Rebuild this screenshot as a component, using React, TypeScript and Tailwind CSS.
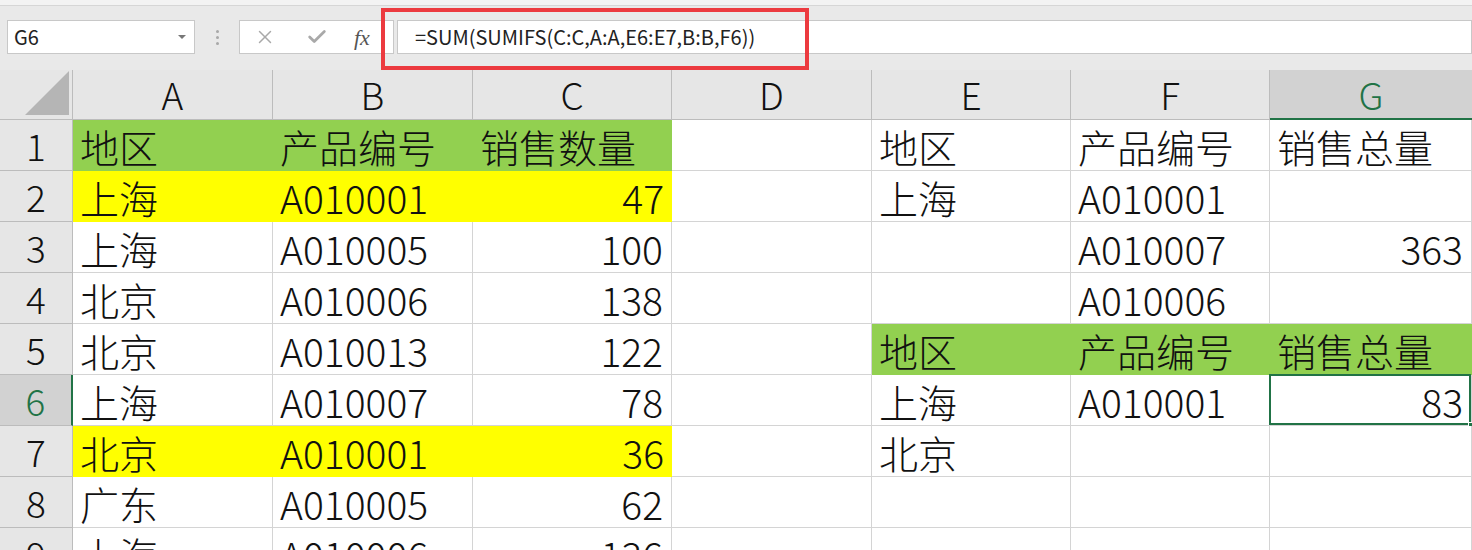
import { X, Check } from "lucide-react"

const FONT = { fontFamily: '"Noto Sans CJK SC", "Noto Sans", sans-serif' }

type Cell = { t?: string; num?: boolean; bg?: string }

const cols = ["A", "B", "C", "D", "E", "F", "G"]
const widths = [200, 200, 199, 200, 199, 199, 202]

const G = "bg-[#92d050]"
const Y = "bg-[#ffff00]"

const rows: Cell[][] = [
  [{ t: "地区", bg: G }, { t: "产品编号", bg: G }, { t: "销售数量", bg: G }, {}, { t: "地区" }, { t: "产品编号" }, { t: "销售总量" }],
  [{ t: "上海", bg: Y }, { t: "A010001", bg: Y }, { t: "47", num: true, bg: Y }, {}, { t: "上海" }, { t: "A010001" }, {}],
  [{ t: "上海" }, { t: "A010005" }, { t: "100", num: true }, {}, {}, { t: "A010007" }, { t: "363", num: true }],
  [{ t: "北京" }, { t: "A010006" }, { t: "138", num: true }, {}, {}, { t: "A010006" }, {}],
  [{ t: "北京" }, { t: "A010013" }, { t: "122", num: true }, {}, { t: "地区", bg: G }, { t: "产品编号", bg: G }, { t: "销售总量", bg: G }],
  [{ t: "上海" }, { t: "A010007" }, { t: "78", num: true }, {}, { t: "上海" }, { t: "A010001" }, { t: "83", num: true }],
  [{ t: "北京", bg: Y }, { t: "A010001", bg: Y }, { t: "36", num: true, bg: Y }, {}, { t: "北京" }, {}, {}],
  [{ t: "广东" }, { t: "A010005" }, { t: "62", num: true }, {}, {}, {}, {}],
  [{ t: "上海" }, { t: "A010006" }, { t: "136", num: true }, {}, {}, {}, {}],
]

function FormulaBar() {
  return (
    <div className="relative h-[70px] bg-[#e9e9e9]">
      <div className="h-[6px] bg-[#f3f3f3] border-b border-[#d6d6d6]" />
      <div className="flex items-center pt-[14px]">
        <div className="ml-[7px] w-[188px] h-[34px] bg-white border border-[#c8c8c8] flex items-center justify-between pl-[6px] pr-[8px]">
          <span className="text-[20px] text-[#222]" style={FONT}>G6</span>
          <span className="w-0 h-0 border-l-[4px] border-r-[4px] border-t-[4px] border-l-transparent border-r-transparent border-t-[#777]" />
        </div>
        <div className="w-[44px] flex flex-col items-center gap-[3px]">
          <span className="w-[3px] h-[3px] rounded-full bg-[#a8a8a8]" />
          <span className="w-[3px] h-[3px] rounded-full bg-[#a8a8a8]" />
          <span className="w-[3px] h-[3px] rounded-full bg-[#a8a8a8]" />
        </div>
        <div className="w-[155px] h-[34px] bg-white border border-[#c8c8c8] flex items-center pl-[14px]">
          <X className="w-[22px] h-[22px] text-[#a9a9a9]" strokeWidth={1.6} />
          <Check className="w-[22px] h-[22px] text-[#a9a9a9] ml-[30px]" strokeWidth={3} />
          <span className="ml-[26px] italic text-[22px] text-[#555]" style={{ fontFamily: '"Liberation Serif", serif' }}>
            fx
          </span>
        </div>
        <div className="ml-[3px] flex-1 h-[34px] bg-white border border-[#c8c8c8] flex items-center pl-[17px]">
          <span className="text-[20px] text-[#222]" style={FONT}>=SUM(SUMIFS(C:C,A:A,E6:E7,B:B,F6))</span>
        </div>
      </div>
      {/* red annotation frame */}
      <div className="absolute left-[381px] top-[8px] w-[428px] h-[62px] border-[4px] border-[#ec3a3f]" />
    </div>
  )
}

export default function App() {
  return (
    <div className="w-[1472px] h-[550px] overflow-hidden bg-white" style={FONT}>
      <FormulaBar />
      <div className="grid" style={{ gridTemplateColumns: `73px ${widths.map(w => w + "px").join(" ")}`, gridTemplateRows: "50px repeat(9, 51px)" }}>
        <div className="bg-[#e6e6e6] border-b border-r border-[#bcbcbc] relative overflow-hidden">
          <svg className="absolute right-[3px] bottom-[4px]" width="44" height="44" viewBox="0 0 44 44">
            <polygon points="44,0 44,44 0,44" fill="#b5b5b5" />
          </svg>
        </div>
        {cols.map(c =>
          c === "G" ? (
            <div key={c} className="bg-[#d2d2d2] border-b-2 border-[#217346] flex items-center justify-center text-[37px] font-light text-[#217346] leading-none">
              {c}
            </div>
          ) : (
            <div key={c} className="bg-[#e6e6e6] border-b border-r border-[#bcbcbc] flex items-center justify-center text-[37px] font-light text-[#111] leading-none">
              {c}
            </div>
          )
        )}
        {rows.map((r, i) => (
          <Row key={i} n={i + 1} cells={r} />
        ))}
      </div>
    </div>
  )
}

function Row({ n, cells }: { n: number; cells: Cell[] }) {
  const sel = n === 6
  return (
    <>
      <div
        className={
          sel
            ? "bg-[#d2d2d2] border-b border-[#bcbcbc] border-r-2 border-r-[#217346] flex items-center justify-center text-[37px] font-light text-[#217346] leading-none"
            : "bg-[#e6e6e6] border-b border-r border-[#bcbcbc] flex items-center justify-center text-[37px] font-light text-[#111] leading-none"
        }
      >
        {n}
      </div>
      {cells.map((c, j) => {
        const selected = sel && j === 6
        const next = cells[j + 1]
        const sameFill = c.bg && next && next.bg === c.bg
        return (
          <div
            key={j}
            className={
              "relative flex items-center text-[39px] font-light text-[#111] leading-none whitespace-nowrap overflow-visible " +
              (c.bg ?? "bg-white") +
              " " +
              (c.bg ? "" : "border-b border-[#d4d4d4] ") +
              (sameFill ? "" : c.bg ? "" : "border-r border-[#d4d4d4] ") +
              (c.num ? "justify-end pr-[8px]" : "pl-[7px]")
            }
          >
            <span className="pt-[2px]">{c.t}</span>
            {selected && (
              <>
                <div className="absolute -left-px -top-px right-0 bottom-0 border-2 border-[#217346]" />
                <div className="absolute -right-[3px] -bottom-[3px] w-[6px] h-[6px] bg-[#217346] border border-white" />
              </>
            )}
          </div>
        )
      })}
    </>
  )
}
